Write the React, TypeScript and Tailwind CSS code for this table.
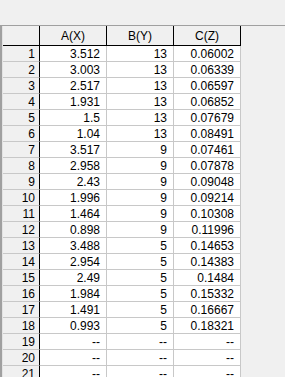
const rows: [string, string, string][] = [
  ['3.512', '13', '0.06002'],
  ['3.003', '13', '0.06339'],
  ['2.517', '13', '0.06597'],
  ['1.931', '13', '0.06852'],
  ['1.5', '13', '0.07679'],
  ['1.04', '13', '0.08491'],
  ['3.517', '9', '0.07461'],
  ['2.958', '9', '0.07878'],
  ['2.43', '9', '0.09048'],
  ['1.996', '9', '0.09214'],
  ['1.464', '9', '0.10308'],
  ['0.898', '9', '0.11996'],
  ['3.488', '5', '0.14653'],
  ['2.954', '5', '0.14383'],
  ['2.49', '5', '0.1484'],
  ['1.984', '5', '0.15332'],
  ['1.491', '5', '0.16667'],
  ['0.993', '5', '0.18321'],
  ['--', '--', '--'],
  ['--', '--', '--'],
  ['--', '--', '--'],
];

const headers = ['A(X)', 'B(Y)', 'C(Z)'];

export default function App() {
  return (
    <div
      className="h-[377px] w-[285px] overflow-hidden bg-[#f0f0f0] text-[12px] leading-none text-black"
      style={{ fontFamily: '"Liberation Sans", Arial, sans-serif' }}
    >
      {/* toolbar area */}
      <div className="h-[25px]" />
      <div className="h-px bg-[#a0a0a0]" />

      <div className="flex">
        {/* sheet frame */}
        <div className="flex w-[3px] shrink-0">
          <div className="w-[2px] bg-[#a0a0a0]" />
          <div className="w-px bg-[#e3e3e3]" />
        </div>

        <div className="flex flex-col">
          {/* column headers */}
          <div className="flex h-[20px] border-b border-black">
            <div className="w-[37px] border-r border-black" />
            {headers.map((h) => (
              <div
                key={h}
                className="flex w-[67px] items-center justify-center border-r border-black"
              >
                {h}
              </div>
            ))}
          </div>

          {rows.map((r, i) => (
            <div key={i} className="flex h-[16px]">
              <div className="flex w-[37px] items-center justify-end border-r border-b border-r-black border-b-[#c8c8c8] pr-[4px]">
                {i + 1}
              </div>
              {r.map((v, j) => (
                <div
                  key={j}
                  className="flex w-[67px] items-center justify-end border-r border-b border-[#c8c8c8] bg-white pr-[6px]"
                >
                  {v}
                </div>
              ))}
            </div>
          ))}
        </div>
      </div>
    </div>
  );
}
